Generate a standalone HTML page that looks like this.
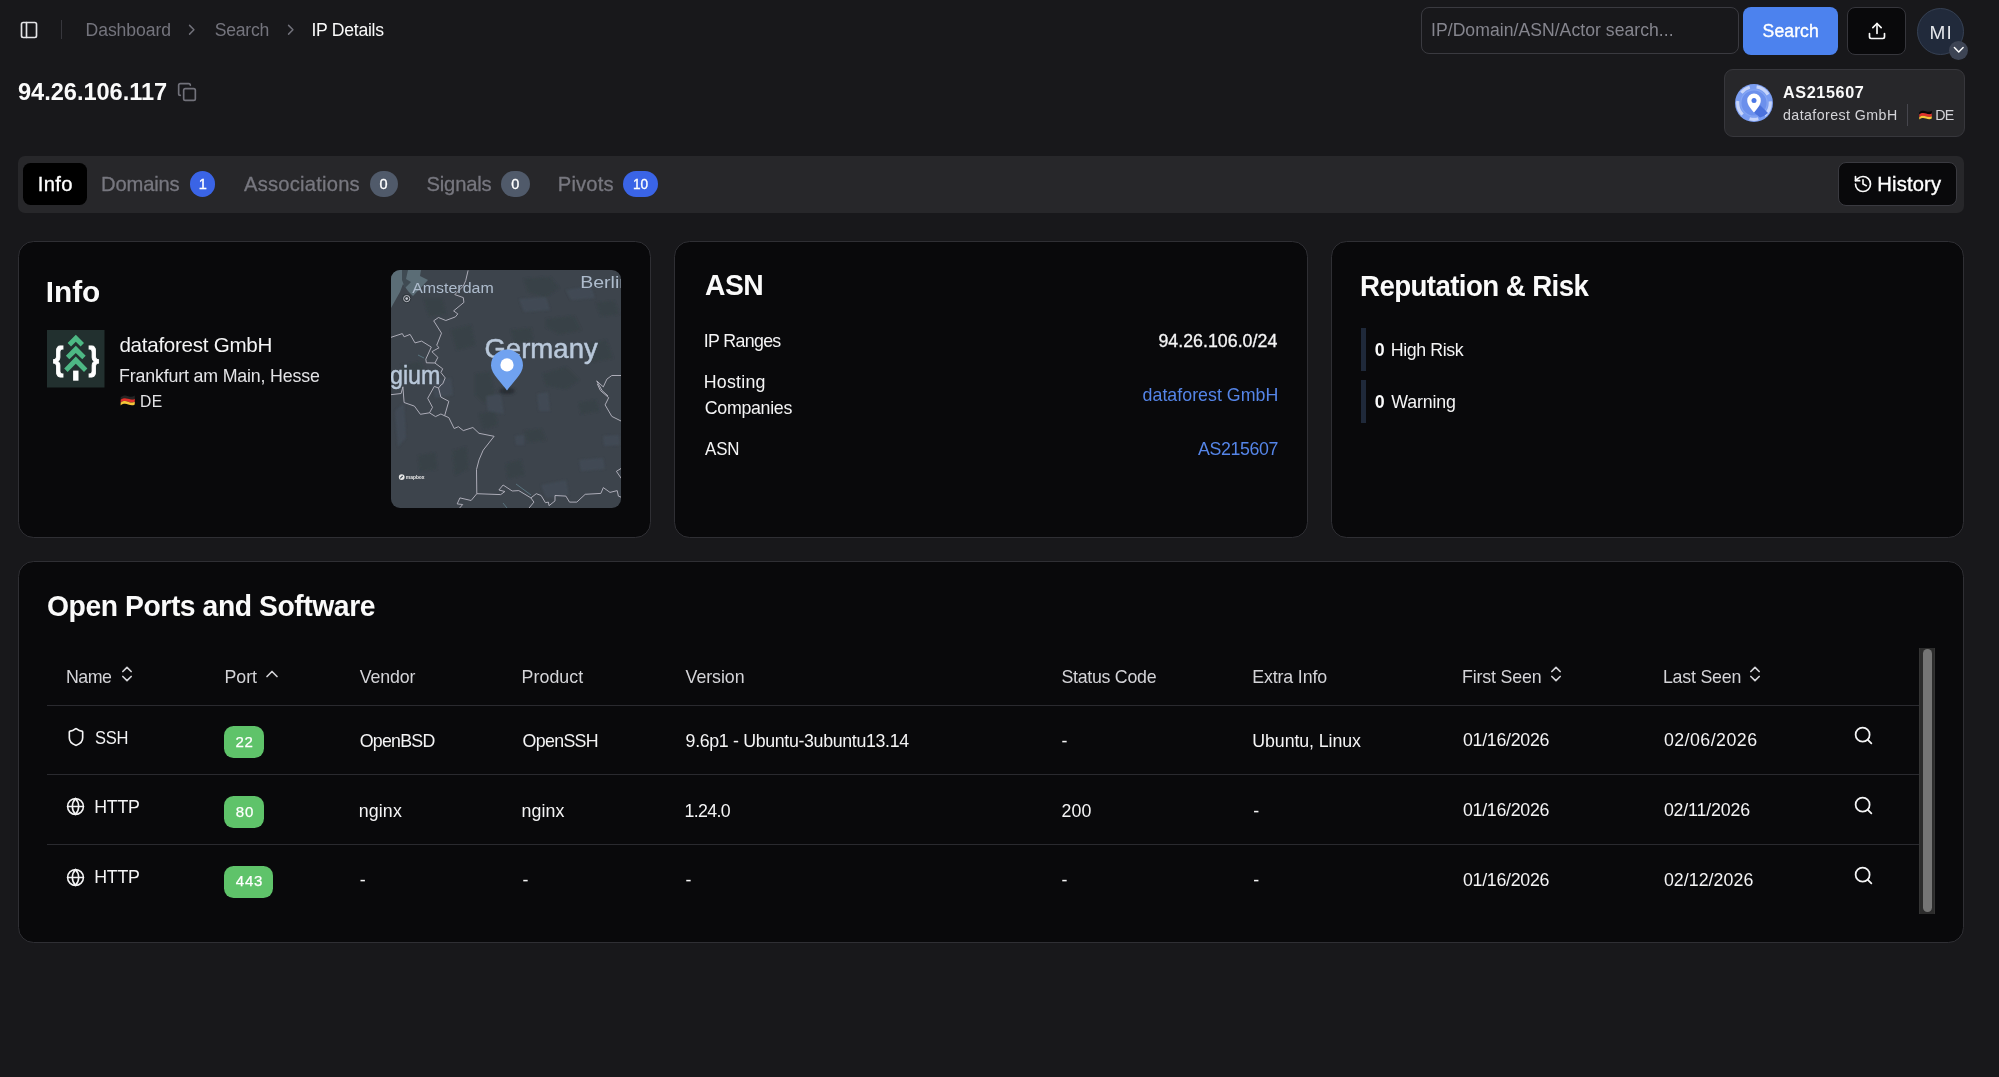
<!DOCTYPE html>
<html lang="en"><head><meta charset="utf-8"><title>IP Details - 94.26.106.117</title>
<style>
html,body{margin:0;padding:0}
body{width:1999px;height:1077px;background:#18181b;position:relative;overflow:hidden;font-family:"Liberation Sans",sans-serif;color:#fafafa}
.t{position:absolute;white-space:nowrap;line-height:normal}
.b{position:absolute;box-sizing:border-box}
.card{background:#09090b;border:1px solid #2f2f34;border-radius:15.5px}
.ic{position:absolute;fill:none;stroke-width:2;stroke-linecap:round;stroke-linejoin:round}
.hl{position:absolute;left:47px;width:1872px;height:1px;background:#2a2a2f}
.pb{position:absolute;left:224.3px;height:31.6px;border-radius:9.5px;background:#5fc36a}
.tb{position:absolute;top:171px;height:26px;border-radius:13px}
</style></head><body>
<!-- header -->
<svg class="ic" style="left:19.25px;top:19.65px" width="20" height="20" viewBox="0 0 24 24" stroke="#e4e4e7"><rect width="18" height="18" x="3" y="3" rx="2"/><path d="M9 3v18"/></svg>
<div class="b" style="left:60.6px;top:20px;width:1px;height:19px;background:#37373d"></div>
<svg class="ic" style="left:183.45px;top:20.9px" width="17.5" height="17.5" viewBox="0 0 24 24" stroke="#71717a"><path d="m9 18 6-6-6-6"/></svg>
<svg class="ic" style="left:281.95px;top:20.9px" width="17.5" height="17.5" viewBox="0 0 24 24" stroke="#71717a"><path d="m9 18 6-6-6-6"/></svg>
<svg class="ic" style="left:176.5px;top:81.5px" width="20" height="20" viewBox="0 0 24 24" stroke="#71717a"><rect width="14" height="14" x="8" y="8" rx="2" ry="2"/><path d="M4 16c-1.1 0-2-.9-2-2V4c0-1.100.9-2 2-2h10c1.100 0 2 .9 2 2"/></svg>
<div class="b" style="left:1421px;top:7px;width:317.5px;height:46.5px;border:1px solid #3a3a40;border-radius:8px"></div>
<div class="b" style="left:1743px;top:7px;width:94.6px;height:48px;border-radius:8px;background:#4c82ee"></div>
<div class="b" style="left:1847px;top:7px;width:58.6px;height:48px;border-radius:8px;background:#09090b;border:1px solid #36363c"></div>
<svg class="ic" style="left:1866.5px;top:20.9px" width="20" height="20" viewBox="0 0 24 24" stroke="#fafafa"><path d="M21 15v4a2 2 0 0 1-2 2H5a2 2 0 0 1-2-2v-4"/><path d="m17 8-5-5-5 5"/><path d="M12 3v12"/></svg>
<div class="b" style="left:1916.8px;top:8px;width:47.4px;height:47.4px;border-radius:50%;background:#212a3b;border:1px solid #364154"></div>
<div class="b" style="left:1948.9px;top:41.1px;width:18.9px;height:18.9px;border-radius:50%;background:#3d4454"></div>
<svg class="ic" style="left:1949.55px;top:41.4px" width="17.5" height="17.5" viewBox="0 0 24 24" stroke="#ffffff"><path d="m6 9 6 6 6-6"/></svg>
<!-- asn chip -->
<div class="b" style="left:1724.4px;top:69px;width:240.6px;height:67.6px;border-radius:9px;background:#27272a;border:1px solid #37373c"></div>
<svg class="b" style="left:1734.75px;top:83.75px" width="38" height="38" viewBox="0 0 38 38">
<circle cx="19" cy="19" r="19" fill="#7a9df2"/>
<circle cx="19" cy="19" r="16.3" fill="none" stroke="#d3defb" stroke-width="3.2" stroke-dasharray="14 7 9 8 15 9 10 7" opacity="0.85"/>
<circle cx="19" cy="19" r="13.2" fill="#6c90ec"/>
<circle cx="19" cy="19" r="13.2" fill="none" stroke="#86a6f3" stroke-width="1.2"/>
<path d="M19 28.5 L25 21 L33 29 A16 16 0 0 1 25 33.5 Z" fill="#4c72dc"/>
<path d="M19 28.6 C17 25.5 12.2 21.3 12.2 16.4 A6.8 6.8 0 0 1 25.800 16.4 C25.800 21.3 21 25.500 19 28.6 Z" fill="#ffffff"/>
<circle cx="19" cy="16.6" r="2.5" fill="#4c78e6"/>
</svg>
<div class="b" style="left:1907px;top:104.4px;width:1px;height:21.2px;background:#46464d"></div>
<svg class="b" style="left:1918.6px;top:109.6px" width="13" height="10" viewBox="0 0 15 11"><path d="M0.300 2.2 C3 0.200 5.500 0.200 8 1.200 S12.500 2 14.700 0.600 L14.700 3.800 C12.500 5.200 10.500 4.600 8 3.800 S3 2.800 0.300 4.800 Z" fill="#060606"/><path d="M0.300 4.800 C3 2.800 5.500 3 8 3.800 S12.500 5.200 14.700 3.800 L14.700 7 C12.500 8.400 10.500 7.600 8 6.800 S3 5.800 0.300 7.800 Z" fill="#e0322c"/><path d="M0.300 7.800 C3 5.800 5.500 6 8 6.800 S12.500 8.400 14.700 7 L14.700 9.600 C12.500 11 10.500 10.400 8 9.600 S3 8.600 0.300 10.600 Z" fill="#f6c73a"/></svg>
<!-- tabs -->
<div class="b" style="left:18px;top:155.5px;width:1946px;height:57px;border-radius:7px;background:#27272a"></div>
<div class="b" style="left:23.4px;top:162.6px;width:63.8px;height:42.8px;border-radius:7.5px;background:#000"></div>
<div class="tb" style="left:189.6px;width:25.6px;background:#3a64e6"></div>
<div class="tb" style="left:369.5px;width:28.4px;background:#505a6a"></div>
<div class="tb" style="left:501.2px;width:28.4px;background:#505a6a"></div>
<div class="tb" style="left:623.2px;width:34.6px;background:#3a64e6"></div>
<div class="b" style="left:1838.3px;top:161.7px;width:119.2px;height:44.1px;border-radius:8px;background:#09090b;border:1px solid #3a3a40"></div>
<svg class="ic" style="left:1852.6px;top:173.5px" width="20" height="20" viewBox="0 0 24 24" stroke="#fafafa"><path d="M3 12a9 9 0 1 0 9-9 9.750 9.750 0 0 0-6.740 2.740L3 8"/><path d="M3 3v5h5"/><path d="M12 7v5l4 2"/></svg>
<!-- cards -->
<div class="b card" style="left:18px;top:241px;width:633px;height:297px"></div>
<div class="b card" style="left:674px;top:241px;width:633.5px;height:297px"></div>
<div class="b card" style="left:1331px;top:241px;width:633px;height:297px"></div>
<div class="b card" style="left:18px;top:561px;width:1946px;height:381.5px"></div>
<!-- logo -->
<svg class="b" style="left:47px;top:330px;will-change:transform" width="57.5" height="57.5" viewBox="0 0 57.5 57.5">
<rect width="57.5" height="57.5" fill="#22302f"/>
<g fill="#4db884"><path d="M28.800 4.800 L37 13.100 L33.600 16.500 L28.800 11.800 L24 16.500 L20.600 13.100 Z"/><path d="M28.800 15.800 L38.700 25.800 L35.300 29.300 L28.800 22.900 L22.300 29.300 L18.900 25.800 Z"/><path d="M28.800 26.600 L40.400 38.400 L37 41.900 L28.800 33.800 L20.600 41.900 L17.200 38.400 Z"/></g>
<rect x="26.1" y="40.6" width="5.400" height="10.100" fill="#ffffff"/>
<g fill="#ffffff" stroke="#ffffff" stroke-width="0.9" font-family="&quot;Liberation Sans&quot;, sans-serif" font-weight="700" font-size="32.3"><text x="0" y="0" transform="translate(6.1,39.9) scale(0.84,1)">{</text><text x="0" y="0" transform="translate(41.6,39.9) scale(0.84,1)">}</text></g>
</svg>
<svg class="b" style="left:119.7px;top:395.2px" width="15.4" height="10.800" viewBox="0 0 15 11"><path d="M0.300 2.2 C3 0.200 5.500 0.200 8 1.200 S12.500 2 14.700 0.600 L14.700 3.800 C12.500 5.200 10.500 4.600 8 3.800 S3 2.800 0.300 4.800 Z" fill="#242424"/><path d="M0.300 4.800 C3 2.800 5.500 3 8 3.800 S12.500 5.200 14.700 3.800 L14.700 7 C12.500 8.400 10.500 7.600 8 6.800 S3 5.800 0.300 7.800 Z" fill="#e0322c"/><path d="M0.300 7.800 C3 5.800 5.500 6 8 6.800 S12.500 8.400 14.700 7 L14.700 9.600 C12.500 11 10.500 10.400 8 9.600 S3 8.600 0.300 10.600 Z" fill="#f6c73a"/></svg>
<svg class="b" style="left:391px;top:270px;border-radius:9px;will-change:transform" width="230" height="238" viewBox="0 0 230 238">
<defs><filter id="bl" x="-50%" y="-50%" width="200%" height="200%"><feGaussianBlur stdDeviation="0.9"/></filter><filter id="bs" x="-50%" y="-50%" width="200%" height="200%"><feGaussianBlur stdDeviation="1.6"/></filter></defs>
<rect width="230" height="238" fill="#3d444c"/>
<g filter="url(#bl)" opacity="0.9"><polygon points="33,29 51,29 55,44 38,46" fill="#394247"/><polygon points="133,9 159,7 168,18 155,27 137,22" fill="#394247"/><polygon points="155,49 183,46 190,60 168,64 155,57" fill="#394247"/><polygon points="205,33 223,31 228,44 210,46" fill="#394247"/><polygon points="84,104 99,102 104,124 93,133 84,124" fill="#394247"/><polygon points="152,104 175,97 188,110 175,119 155,115" fill="#394247"/><polygon points="88,144 104,141 106,155 93,159" fill="#394247"/><polygon points="133,161 150,159 155,170 137,172" fill="#394247"/><polygon points="27,186 44,183 46,199 29,201" fill="#394247"/><polygon points="115,194 130,190 133,205 117,208" fill="#394247"/><polygon points="62,181 75,177 77,199 64,205" fill="#394247"/><polygon points="188,133 205,130 208,141 190,144" fill="#394247"/><polygon points="60,60 80,55 84,75 66,80" fill="#394247"/><polygon points="120,60 140,58 142,70 124,74" fill="#394247"/><polygon points="10,95 30,92 34,100 12,104" fill="#394247"/><polygon points="195,75 215,70 222,88 200,92" fill="#394247"/><polygon points="128,29 155,27 159,40 133,42" fill="#424c56"/><polygon points="95,126 110,124 113,144 97,141" fill="#424c56"/><polygon points="146,124 157,122 159,141 148,141" fill="#424c56"/><polygon points="124,166 133,165 133,175 125,175" fill="#424c56"/><polygon points="212,166 228,165 229,175 213,176" fill="#424c56"/><polygon points="188,190 212,188 214,199 190,201" fill="#424c56"/><polygon points="4,141 13,133 15,168 7,177" fill="#424c56"/><polygon points="40,110 60,108 62,125 44,128" fill="#424c56"/><polygon points="175,20 200,16 204,28 180,30" fill="#424c56"/><polygon points="150,215 175,210 178,225 155,228" fill="#424c56"/></g>
<path d="M0,0 L30,0 L29,6 L37,10 L22,26 L17,21 L12,14 L9,22 L0,38 Z" fill="#5b6d76"/>
<path d="M11,0 L17,0 L15,9 L20,12 L14,18 L11,10 Z" fill="#3f4a52"/>
<g fill="none" stroke="#b9b8c4" stroke-width="0.95" stroke-linejoin="round" opacity="0.95">
<polyline points="77.1,0.4 74.7,10.7 72.3,16.1 63.8,24.6 72.3,27.6 72.9,32.4 62.6,40.9 66.8,43.9 64.4,46.9 54.8,50.5 47.5,47.5 42.7,50.8 50.5,63.2 45.7,75.3 48.1,77.7 40.9,81.7 46.9,87.4 43.9,93.0 51.7,98.8 49.9,102.4 54.2,107.9 51.7,113.9 49.9,115.0 47.5,118.0 49.9,127.1 57.8,131.3 53.6,145.8 57.8,147.6 63.2,158.5 67.4,156.7 72.3,160.6 81.9,157.5 88.0,163.3 103.1,166.3 92.2,180.2 88.0,189.9 85.5,199.5 85.8,223.7 109.7,224.6 113.9,221.5 107.9,220.0 112.1,215.0 121.2,221.0 127.8,220.6 139.9,227.9 145.3,223.7 150.1,225.5 154.4,232.7 157.4,232.1 158.0,235.7 164.0,230.9 164.0,225.5 174.9,226.1 178.5,232.1 185.8,232.1 194.2,224.3 209.9,223.4 212.3,217.6 219.0,222.4 226.2,220.6 227.4,226.1 230.4,227.3"/>
<polyline points="-0.2,67.4 11.3,63.6 13.1,66.8 19.1,64.4 24.0,72.9 30.6,71.1 40.3,77.1 34.8,89.2 35.4,92.8 43.9,93.0"/>
<polyline points="47.5,118.0 43.3,116.4 36.7,128.3 41.5,137.3 38.5,142.8 44.5,146.6 49.9,144.0 53.6,145.8"/>
<polyline points="-0.2,124.7 10.1,123.5 11.9,116.8 13.1,132.5 23.4,136.1 29.4,144.3 38.5,142.8"/>
<polyline points="85.8,223.7 80.1,230.5 68.9,227.9 66.2,233.9 71.7,234.5 68.0,238.7"/>
<polyline points="139.9,227.9 142.9,232.1 137.5,238.7"/>
<polyline points="230.4,105.5 220.8,105.5 215.9,109.1 212.3,116.9 205.7,110.9 211.1,120.6 217.1,126.0"/>
<polyline points="206.3,113.8 209.3,120.4 217.7,127.7 214.1,134.9 220.8,146.4 230.4,151.2"/>
<polyline points="230.4,198.3 225.4,201.3 230.4,208.6"/>
</g>
<g stroke="#5f7f8a" stroke-width="0.8" fill="none"><path d="M27,85 L33,88"/><path d="M125,214 L140,225"/><path d="M112,233 L116,238"/></g>
<text x="21.2" y="23.4" fill="#aebccd" font-family="&quot;Liberation Sans&quot;, sans-serif" font-size="15.2" textLength="81.5" lengthAdjust="spacingAndGlyphs">Amsterdam</text>
<text x="189.2" y="18" fill="#aebccd" font-family="&quot;Liberation Sans&quot;, sans-serif" font-size="16" textLength="50" lengthAdjust="spacingAndGlyphs">Berlin</text>
<text x="93.4" y="88" fill="#b9c8da" font-family="&quot;Liberation Sans&quot;, sans-serif" font-size="27.8" textLength="113.4" lengthAdjust="spacingAndGlyphs" stroke="#b9c8da" stroke-width="0.5">Germany</text>
<text x="-34.6" y="113.8" fill="#b9c8da" font-family="&quot;Liberation Sans&quot;, sans-serif" font-size="26.4" textLength="84" lengthAdjust="spacingAndGlyphs" stroke="#b9c8da" stroke-width="0.5">Belgium</text>
<circle cx="15.7" cy="28.6" r="4.6" fill="#2f363c"/><circle cx="15.7" cy="28.6" r="3.1" fill="none" stroke="#c9ccd4" stroke-width="0.9"/><circle cx="15.7" cy="28.6" r="1.3" fill="#c9ccd4"/>
<ellipse cx="116" cy="121" rx="8" ry="3.2" fill="#20262b" opacity="0.75" filter="url(#bs)"/>
<path d="M116,120.6 C112,114 100,104 100,95.4 A16,16 0 0 1 132,95.4 C132,104 120,114 116,120.6 Z" fill="#70a2f0"/>
<circle cx="116" cy="94.9" r="6.6" fill="#ffffff"/>
<circle cx="10.7" cy="207.1" r="2.9" fill="#e8e8e8"/><path d="M9.3,208.4 l2.4,-2.6" stroke="#3c464e" stroke-width="1.2"/>
<text x="14.8" y="209" fill="#e8e8e8" font-family="&quot;Liberation Sans&quot;, sans-serif" font-size="5.4" font-weight="700" textLength="18.8" lengthAdjust="spacingAndGlyphs">mapbox</text>
</svg>
<!-- reputation bars -->
<div class="b" style="left:1361px;top:328px;width:5px;height:43px;background:#1f293a"></div>
<div class="b" style="left:1361px;top:380px;width:5px;height:43px;background:#1f293a"></div>
<!-- table -->
<div class="hl" style="top:705px"></div>
<div class="hl" style="top:774.3px"></div>
<div class="hl" style="top:844.4px"></div>
<div class="b" style="left:1919px;top:648px;width:16px;height:266px;background:#2c2c2c;border-left:1px solid #343434;border-right:1px solid #343434"></div>
<div class="b" style="left:1923px;top:649px;width:9px;height:263px;border-radius:4.5px;background:#757575"></div>
<svg class="ic" style="left:116.750px;top:664.2px" width="20" height="20" viewBox="0 0 24 24" stroke="#d4d4d8"><path d="m7 15 5 5 5-5"/><path d="m7 9 5-5 5 5"/></svg>
<svg class="ic" style="left:1545.500px;top:664px" width="20" height="20" viewBox="0 0 24 24" stroke="#d4d4d8"><path d="m7 15 5 5 5-5"/><path d="m7 9 5-5 5 5"/></svg>
<svg class="ic" style="left:1745px;top:664px" width="20" height="20" viewBox="0 0 24 24" stroke="#d4d4d8"><path d="m7 15 5 5 5-5"/><path d="m7 9 5-5 5 5"/></svg>
<svg class="ic" style="left:261.700px;top:664.1px" width="20" height="20" viewBox="0 0 24 24" stroke="#d4d4d8"><path d="m18 15-6-6-6 6"/></svg>
<svg class="ic" style="left:65.500px;top:727.2px" width="20" height="20" viewBox="0 0 24 24" stroke="#f4f4f5"><path d="M20 13c0 5-3.500 7.500-7.660 8.950a1 1 0 0 1-.670-.010C7.500 20.500 4 18 4 13V6a1 1 0 0 1 1-1c2 0 4.500-1.200 6.240-2.720a1.170 1.170 0 0 1 1.520 0C14.510 3.810 17 5 19 5a1 1 0 0 1 1 1z"/></svg>
<svg class="ic" style="left:66.200px;top:797.250px" width="19" height="19" viewBox="0 0 24 24" stroke="#f4f4f5"><circle cx="12" cy="12" r="10"/><path d="M12 2a14.500 14.500 0 0 0 0 20 14.500 14.500 0 0 0 0-20"/><path d="M2 12h20"/></svg>
<svg class="ic" style="left:66.200px;top:867.500px" width="19" height="19" viewBox="0 0 24 24" stroke="#f4f4f5"><circle cx="12" cy="12" r="10"/><path d="M12 2a14.500 14.500 0 0 0 0 20 14.500 14.500 0 0 0 0-20"/><path d="M2 12h20"/></svg>
<div class="pb" style="top:726px;width:39.4px"></div>
<div class="pb" style="top:796px;width:40.1px"></div>
<div class="pb" style="top:866px;width:48.9px"></div>
<svg class="ic" style="left:1852.900px;top:725.400px" width="21" height="21" viewBox="0 0 24 24" stroke="#f4f4f5"><circle cx="11" cy="11" r="8"/><path d="m21 21-4.300-4.300"/></svg>
<svg class="ic" style="left:1852.900px;top:795.250px" width="21" height="21" viewBox="0 0 24 24" stroke="#f4f4f5"><circle cx="11" cy="11" r="8"/><path d="m21 21-4.300-4.300"/></svg>
<svg class="ic" style="left:1852.900px;top:865.250px" width="21" height="21" viewBox="0 0 24 24" stroke="#f4f4f5"><circle cx="11" cy="11" r="8"/><path d="m21 21-4.300-4.300"/></svg>
<!-- texts -->
<div style="position:absolute;left:0;top:0;width:1999px;height:1077px;will-change:transform">
<span class="t" style="left:85.60px;top:20px;font-size:17.6px;color:#74747d;letter-spacing:-0.086px;">Dashboard</span>
<span class="t" style="left:214.70px;top:20px;font-size:17.6px;color:#74747d;letter-spacing:-0.232px;">Search</span>
<span class="t" style="left:311.50px;top:20px;font-size:17.6px;color:#fafafa;letter-spacing:-0.277px;">IP Details</span>
<span class="t" style="left:18.40px;top:78px;font-size:24.6px;color:#fafafa;letter-spacing:-0.038px;font-weight:700;transform:scaleX(0.96);transform-origin:0 0;">94.26.106.117</span>
<span class="t" style="left:1431.00px;top:20px;font-size:17.6px;color:#85858e;letter-spacing:0.038px;">IP/Domain/ASN/Actor search...</span>
<span class="t" style="left:1762.60px;top:21px;font-size:17.6px;color:#ffffff;letter-spacing:0.088px;-webkit-text-stroke:0.35px #ffffff;">Search</span>
<span class="t" style="left:1929.40px;top:22px;font-size:19px;color:#e5e7eb;letter-spacing:1.273px;">MI</span>
<span class="t" style="left:1783.00px;top:83px;font-size:16.2px;color:#fafafa;letter-spacing:0.607px;font-weight:700;">AS215607</span>
<span class="t" style="left:1783.00px;top:107px;font-size:14.2px;color:#d4d4d8;letter-spacing:0.437px;">dataforest GmbH</span>
<span class="t" style="left:1935.25px;top:107px;font-size:14.2px;color:#d4d4d8;letter-spacing:-0.746px;">DE</span>
<span class="t" style="left:37.80px;top:173px;font-size:20.2px;color:#ffffff;letter-spacing:0.352px;-webkit-text-stroke:0.35px #ffffff;">Info</span>
<span class="t" style="left:101.00px;top:173px;font-size:20.2px;color:#77777f;letter-spacing:-0.160px;-webkit-text-stroke:0.3px #77777f;">Domains</span>
<span class="t" style="left:244.00px;top:173px;font-size:20.2px;color:#77777f;letter-spacing:0.215px;-webkit-text-stroke:0.3px #77777f;">Associations</span>
<span class="t" style="left:426.50px;top:173px;font-size:20.2px;color:#77777f;letter-spacing:-0.169px;-webkit-text-stroke:0.3px #77777f;">Signals</span>
<span class="t" style="left:557.80px;top:173px;font-size:20.2px;color:#77777f;letter-spacing:0.144px;-webkit-text-stroke:0.3px #77777f;">Pivots</span>
<span class="t" style="left:198.80px;top:176px;font-size:14.5px;color:#ffffff;-webkit-text-stroke:0.35px #ffffff;">1</span>
<span class="t" style="left:379.40px;top:176px;font-size:14.5px;color:#ffffff;-webkit-text-stroke:0.35px #ffffff;">0</span>
<span class="t" style="left:511.20px;top:176px;font-size:14.5px;color:#ffffff;-webkit-text-stroke:0.35px #ffffff;">0</span>
<span class="t" style="left:632.86px;top:176px;font-size:14.5px;color:#ffffff;letter-spacing:-0.171px;transform:scaleX(0.94);transform-origin:0 0;-webkit-text-stroke:0.35px #ffffff;">10</span>
<span class="t" style="left:1877.30px;top:173px;font-size:20.2px;color:#ffffff;letter-spacing:0.164px;-webkit-text-stroke:0.35px #ffffff;">History</span>
<span class="t" style="left:45.80px;top:275px;font-size:29.8px;color:#fafafa;letter-spacing:-0.067px;font-weight:700;">Info</span>
<span class="t" style="left:119.40px;top:333px;font-size:20.6px;color:#f4f4f5;letter-spacing:-0.274px;">dataforest GmbH</span>
<span class="t" style="left:119.00px;top:366px;font-size:17.8px;color:#e4e4e7;letter-spacing:-0.159px;">Frankfurt am Main, Hesse</span>
<span class="t" style="left:139.60px;top:391px;font-size:17.4px;color:#e4e4e7;letter-spacing:0.441px;transform:scaleX(0.9);transform-origin:0 0;">DE</span>
<span class="t" style="left:704.80px;top:268px;font-size:29.8px;color:#fafafa;letter-spacing:-0.591px;font-weight:700;transform:scaleX(0.95);transform-origin:0 0;">ASN</span>
<span class="t" style="left:703.80px;top:331px;font-size:17.8px;color:#f4f4f5;letter-spacing:-0.655px;">IP Ranges</span>
<span class="t" style="left:1158.40px;top:331px;font-size:17.8px;color:#f4f4f5;letter-spacing:0.018px;-webkit-text-stroke:0.3px #f4f4f5;">94.26.106.0/24</span>
<span class="t" style="left:703.80px;top:372px;font-size:17.8px;color:#f4f4f5;letter-spacing:0.217px;">Hosting</span>
<span class="t" style="left:704.80px;top:398px;font-size:17.8px;color:#f4f4f5;letter-spacing:-0.306px;">Companies</span>
<span class="t" style="left:1142.60px;top:385px;font-size:17.8px;color:#5585e8;letter-spacing:0.018px;">dataforest GmbH</span>
<span class="t" style="left:704.80px;top:439px;font-size:17.8px;color:#f4f4f5;letter-spacing:-0.123px;transform:scaleX(0.95);transform-origin:0 0;">ASN</span>
<span class="t" style="left:1198.00px;top:439px;font-size:17.8px;color:#5585e8;letter-spacing:-0.395px;">AS215607</span>
<span class="t" style="left:1359.74px;top:269px;font-size:29.8px;color:#fafafa;letter-spacing:-0.657px;font-weight:700;transform:scaleX(0.93);transform-origin:0 0;">Reputation &amp; Risk</span>
<span class="t" style="left:1374.80px;top:340px;font-size:17.8px;color:#fafafa;font-weight:700;">0</span>
<span class="t" style="left:1390.80px;top:340px;font-size:17.8px;color:#f4f4f5;letter-spacing:-0.411px;">High Risk</span>
<span class="t" style="left:1374.80px;top:392px;font-size:17.8px;color:#fafafa;font-weight:700;">0</span>
<span class="t" style="left:1391.30px;top:392px;font-size:17.8px;color:#f4f4f5;letter-spacing:-0.160px;">Warning</span>
<span class="t" style="left:47.05px;top:589px;font-size:29.8px;color:#fafafa;letter-spacing:-0.463px;font-weight:700;transform:scaleX(0.95);transform-origin:0 0;">Open Ports and Software</span>
<span class="t" style="left:65.90px;top:667px;font-size:17.8px;color:#d4d4d8;letter-spacing:-0.481px;">Name</span>
<span class="t" style="left:224.60px;top:667px;font-size:17.8px;color:#d4d4d8;letter-spacing:-0.090px;">Port</span>
<span class="t" style="left:359.70px;top:667px;font-size:17.8px;color:#d4d4d8;letter-spacing:-0.147px;">Vendor</span>
<span class="t" style="left:521.60px;top:667px;font-size:17.8px;color:#d4d4d8;letter-spacing:0.043px;">Product</span>
<span class="t" style="left:685.60px;top:667px;font-size:17.8px;color:#d4d4d8;letter-spacing:-0.053px;">Version</span>
<span class="t" style="left:1061.40px;top:667px;font-size:17.8px;color:#d4d4d8;letter-spacing:-0.267px;">Status Code</span>
<span class="t" style="left:1252.30px;top:667px;font-size:17.8px;color:#d4d4d8;letter-spacing:-0.146px;">Extra Info</span>
<span class="t" style="left:1462.00px;top:667px;font-size:17.8px;color:#d4d4d8;letter-spacing:-0.149px;">First Seen</span>
<span class="t" style="left:1662.90px;top:667px;font-size:17.8px;color:#d4d4d8;letter-spacing:-0.211px;">Last Seen</span>
<span class="t" style="left:95.20px;top:728px;font-size:17.8px;color:#f4f4f5;letter-spacing:-0.333px;transform:scaleX(0.93);transform-origin:0 0;">SSH</span>
<span class="t" style="left:235.60px;top:733px;font-size:15px;color:#ffffff;letter-spacing:0.458px;-webkit-text-stroke:0.25px #ffffff;">22</span>
<span class="t" style="left:359.70px;top:731px;font-size:17.8px;color:#f4f4f5;letter-spacing:-0.736px;">OpenBSD</span>
<span class="t" style="left:522.60px;top:731px;font-size:17.8px;color:#f4f4f5;letter-spacing:-0.670px;">OpenSSH</span>
<span class="t" style="left:685.60px;top:731px;font-size:17.8px;color:#f4f4f5;letter-spacing:-0.340px;">9.6p1 - Ubuntu-3ubuntu13.14</span>
<span class="t" style="left:1061.40px;top:731px;font-size:17.8px;color:#f4f4f5;">-</span>
<span class="t" style="left:1252.30px;top:731px;font-size:17.8px;color:#f4f4f5;letter-spacing:-0.095px;">Ubuntu, Linux</span>
<span class="t" style="left:1463.00px;top:730px;font-size:17.8px;color:#f4f4f5;letter-spacing:-0.289px;">01/16/2026</span>
<span class="t" style="left:1663.90px;top:730px;font-size:17.8px;color:#f4f4f5;letter-spacing:0.466px;">02/06/2026</span>
<span class="t" style="left:94.20px;top:797px;font-size:17.8px;color:#f4f4f5;letter-spacing:-0.255px;">HTTP</span>
<span class="t" style="left:235.80px;top:803px;font-size:15px;color:#ffffff;letter-spacing:0.858px;-webkit-text-stroke:0.25px #ffffff;">80</span>
<span class="t" style="left:358.70px;top:801px;font-size:17.8px;color:#f4f4f5;letter-spacing:0.146px;">nginx</span>
<span class="t" style="left:521.60px;top:801px;font-size:17.8px;color:#f4f4f5;letter-spacing:0.046px;">nginx</span>
<span class="t" style="left:684.60px;top:801px;font-size:17.8px;color:#f4f4f5;letter-spacing:-0.690px;">1.24.0</span>
<span class="t" style="left:1061.40px;top:801px;font-size:17.8px;color:#f4f4f5;letter-spacing:0.161px;">200</span>
<span class="t" style="left:1253.30px;top:801px;font-size:17.8px;color:#f4f4f5;">-</span>
<span class="t" style="left:1463.00px;top:800px;font-size:17.8px;color:#f4f4f5;letter-spacing:-0.289px;">01/16/2026</span>
<span class="t" style="left:1663.90px;top:800px;font-size:17.8px;color:#f4f4f5;letter-spacing:-0.165px;">02/11/2026</span>
<span class="t" style="left:94.20px;top:867px;font-size:17.8px;color:#f4f4f5;letter-spacing:-0.255px;">HTTP</span>
<span class="t" style="left:235.80px;top:872px;font-size:15px;color:#ffffff;letter-spacing:0.758px;-webkit-text-stroke:0.25px #ffffff;">443</span>
<span class="t" style="left:359.70px;top:870px;font-size:17.8px;color:#f4f4f5;">-</span>
<span class="t" style="left:522.60px;top:870px;font-size:17.8px;color:#f4f4f5;">-</span>
<span class="t" style="left:685.60px;top:870px;font-size:17.8px;color:#f4f4f5;">-</span>
<span class="t" style="left:1061.40px;top:870px;font-size:17.8px;color:#f4f4f5;">-</span>
<span class="t" style="left:1253.30px;top:870px;font-size:17.8px;color:#f4f4f5;">-</span>
<span class="t" style="left:1463.00px;top:870px;font-size:17.8px;color:#f4f4f5;letter-spacing:-0.289px;">01/16/2026</span>
<span class="t" style="left:1663.90px;top:870px;font-size:17.8px;color:#f4f4f5;letter-spacing:0.044px;">02/12/2026</span>
</div>
</body></html>
